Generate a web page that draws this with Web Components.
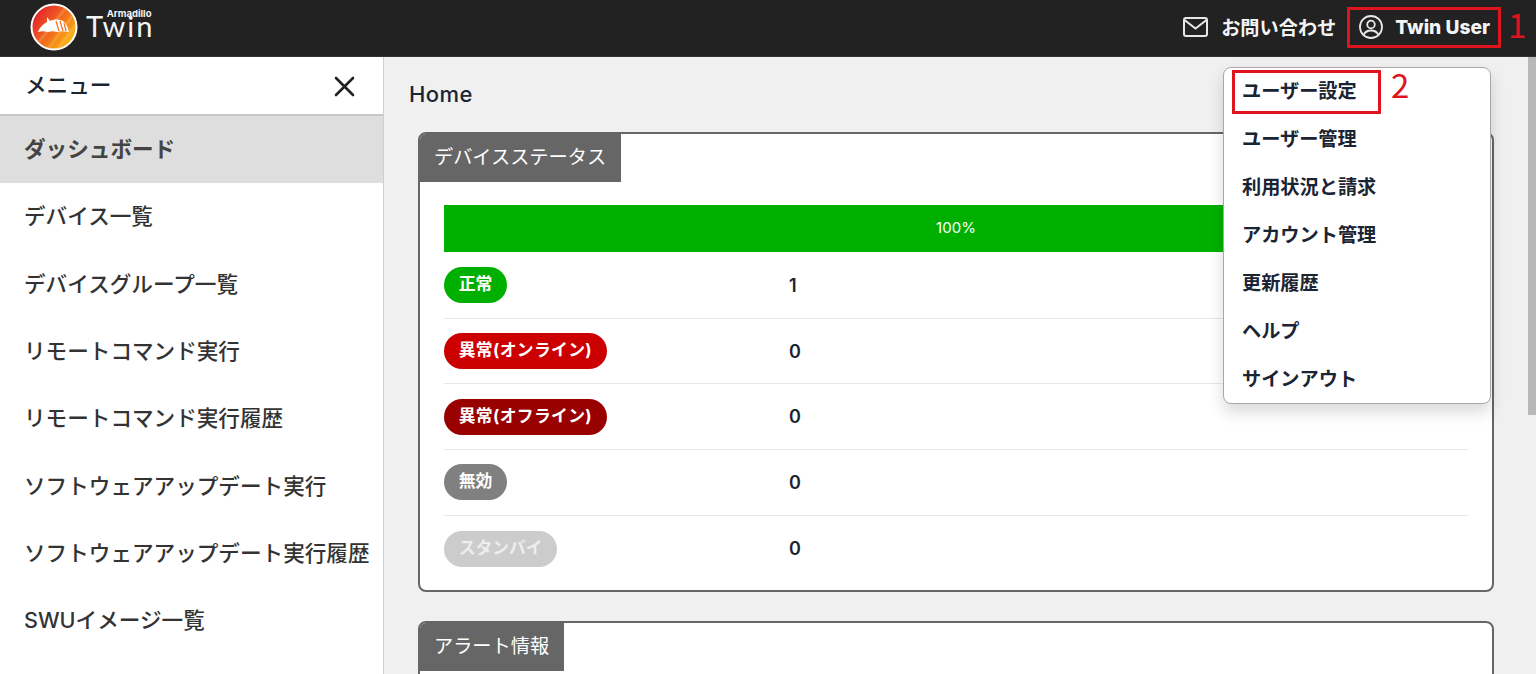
<!DOCTYPE html>
<html lang="ja">
<head>
<meta charset="utf-8">
<title>Armadillo Twin</title>
<style>
    html, body {
        margin: 0;
        height: 100%;
        overflow: hidden;
    }

    body {
        font-family: Inter, "Noto Sans CJK JP", sans-serif;
        color: #1a2433;
    }
</style>
</head>
<body>
<tw-app>
    <tw-header slot="header"></tw-header>
    <tw-sidebar slot="sidebar">
        <tw-nav-item active>ダッシュボード</tw-nav-item>
        <tw-nav-item>デバイス一覧</tw-nav-item>
        <tw-nav-item>デバイスグループ一覧</tw-nav-item>
        <tw-nav-item>リモートコマンド実行</tw-nav-item>
        <tw-nav-item>リモートコマンド実行履歴</tw-nav-item>
        <tw-nav-item>ソフトウェアアップデート実行</tw-nav-item>
        <tw-nav-item>ソフトウェアアップデート実行履歴</tw-nav-item>
        <tw-nav-item>SWUイメージ一覧</tw-nav-item>
    </tw-sidebar>
    <tw-card heading="デバイスステータス">
        <tw-progress>100%</tw-progress>
        <tw-status-row color="#00b000" value="1">正常</tw-status-row>
        <tw-status-row color="#cc0000" value="0" style="letter-spacing: 0.35px">異常(オンライン)</tw-status-row>
        <tw-status-row color="#990000" value="0" style="letter-spacing: 0.35px">異常(オフライン)</tw-status-row>
        <tw-status-row color="#808080" value="0">無効</tw-status-row>
        <tw-status-row color="#cccccc" value="0" last>スタンバイ</tw-status-row>
    </tw-card>
    <tw-card heading="アラート情報"></tw-card>
    <tw-user-menu slot="overlay"></tw-user-menu>
</tw-app>

<script>
// Page frame: header on top, sidebar, scrolling content and its scrollbar below.
var templateApp = document.createElement('template')
templateApp.innerHTML = `
<style>
    :host {
        display: grid;
        grid-template-columns: 384px 1fr 8px;
        grid-template-rows: 57px 617px;
        height: 674px;
        position: relative;
        overflow: hidden;
        background: #f0f0f0;
    }

    ::slotted([slot="header"]) {
        grid-column: 1 / -1;
    }

    .content {
        overflow: hidden;
        padding: 20px 34px 0 25px;
        display: flex;
        flex-direction: column;
        gap: 30px;
        min-width: 0;
    }

    .page-title {
        font-size: 22px;
        letter-spacing: 0.4px;
        line-height: 34px;
        font-weight: 500;
        margin-bottom: -9px;
        color: #1a2433;
    }

    .cards {
        display: flex;
        flex-direction: column;
        gap: 29px;
        margin-left: 9px;
    }

    .track {
        background: #f0f0f0;
    }

    .thumb {
        height: 358px;
        background: #b8b8b8;
    }
</style>
<slot name="header"></slot>
<slot name="sidebar"></slot>
<div class="content">
    <div class="page-title">Home</div>
    <div class="cards"><slot></slot></div>
</div>
<div class="track"><div class="thumb"></div></div>
<slot name="overlay"></slot>
`

class TwApp extends HTMLElement {
    constructor() {
        super()
        this.shadow = this.attachShadow({ mode: 'open' })
        this.shadow.appendChild(templateApp.content.cloneNode(true))
    }
}

// Top bar with logo, contact link and the user button.
var templateHeader = document.createElement('template')
templateHeader.innerHTML = `
<style>
    :host {
        display: flex;
        align-items: center;
        background: #222222;
        color: #ffffff;
        padding: 0 46px 2px 30px;
        border-bottom: 1px solid #333;
        box-sizing: border-box;
    }

    .brand {
        display: flex;
        align-items: center;
        gap: 8px;
    }

    .wordmark {
        font-family: Lato, sans-serif;
        font-size: 29px;
        font-weight: 400;
        letter-spacing: 2px;
        line-height: 16px;
        margin-bottom: 10px;
        color: #f4f4f4;
    }

    .wordmark small {
        display: block;
        height: 7px;
        text-align: right;
        padding-right: 3px;
        font-family: Inter, sans-serif;
        font-size: 9.500px;
        font-weight: 700;
        letter-spacing: 0;
        line-height: 7px;
    }

    .wordmark span {
        display: block;
        margin-top: 1px;
    }

    .spacer {
        flex: 1;
    }

    .link {
        display: flex;
        align-items: center;
        font-size: 19.2px;
        font-weight: 700;
        color: #f4f4f4;
        white-space: nowrap;
    }

    .contact {
        gap: 13px;
        margin-right: 23px;
    }

    .user {
        gap: 12px;
    }

    .user span {
        font-size: 19.2px;
        font-weight: 800;
    }

    svg {
        display: block;
        flex: none;
    }
</style>
<div class="brand">
    <svg width="48" height="48" viewBox="0 0 48 48">
        <defs>
            <linearGradient id="sun" x1="0.1" y1="0.2" x2="0.9" y2="0.8">
                <stop offset="0" stop-color="#e4252c"/>
                <stop offset="0.55" stop-color="#f2701c"/>
                <stop offset="1" stop-color="#fbb80f"/>
            </linearGradient>
            <clipPath id="disc"><circle cx="24" cy="24" r="22"/></clipPath>
        </defs>
        <circle cx="24" cy="24" r="22.500" fill="url(#sun)" stroke="#fff" stroke-width="2"/>
        <g clip-path="url(#disc)" stroke="#ffe08a" stroke-opacity="0.22" stroke-width="3">
            <path d="M18 46L46 8M26 48L50 16M8 40L38 2"/>
        </g>
        <path d="M8 29c2-5 5-8 9-10l0-5 3 4c4-2 9-2 13 0 3 2 5 6 6 11-5-1-9-1-12 0-3-1-6-1-9 0-4-1-7-1-10 0z" fill="#fff"/>
        <path d="M26 18l3 10M30 18l3 10M34 20l2 8" stroke="#f2701c" stroke-width="1.200" fill="none"/>
    </svg>
    <div class="wordmark"><small>Armadillo</small><span>Twin</span></div>
</div>
<div class="spacer"></div>
<div class="link contact">
    <svg width="25" height="20" viewBox="0 0 25 20" fill="none" stroke="#e8e8e8" stroke-width="2">
        <rect x="1" y="1" width="23" height="18" rx="2"/>
        <path d="M1.500 3l11 8.500L23.500 3"/>
    </svg>
    お問い合わせ
</div>
<div class="link user">
    <svg width="24" height="24" viewBox="0 0 24 24" fill="none" stroke="#e8e8e8" stroke-width="1.800">
        <circle cx="12" cy="12" r="11"/>
        <circle cx="12" cy="9.500" r="3.800"/>
        <path d="M4.800 19.500c1.500-3 4-4 7.200-4s5.700 1 7.200 4"/>
    </svg>
    <span>Twin User</span>
</div>
`

class TwHeader extends HTMLElement {
    constructor() {
        super()
        this.shadow = this.attachShadow({ mode: 'open' })
        this.shadow.appendChild(templateHeader.content.cloneNode(true))
    }
}

// Left navigation.
var templateSidebar = document.createElement('template')
templateSidebar.innerHTML = `
<style>
    :host {
        display: block;
        background: #ffffff;
        border-right: 1px solid #cfcfcf;
        overflow: hidden;
    }

    .head {
        display: flex;
        align-items: center;
        justify-content: space-between;
        height: 59px;
        box-sizing: border-box;
        padding: 0 28px 4px 25px;
        border-bottom: 2px solid #c8c8c8;
        font-size: 21.6px;
        font-weight: 500;
        color: #1a2433;
    }

    svg {
        display: block;
        margin-top: 5px;
    }
</style>
<div class="head">
    <span>メニュー</span>
    <svg width="21" height="21" viewBox="0 0 21 21" stroke="#222" stroke-width="2.600" stroke-linecap="round">
        <path d="M2 2l17 17M19 2L2 19"/>
    </svg>
</div>
<slot></slot>
`

class TwSidebar extends HTMLElement {
    constructor() {
        super()
        this.shadow = this.attachShadow({ mode: 'open' })
        this.shadow.appendChild(templateSidebar.content.cloneNode(true))
    }
}

var templateNavItem = document.createElement('template')
templateNavItem.innerHTML = `
<style>
    :host {
        display: flex;
        align-items: center;
        box-sizing: border-box;
        height: 67.300px;
        padding: 0 0 4px 24px;
        font-size: 21.6px;
        font-weight: 500;
        color: #333333;
        white-space: nowrap;
    }

    :host([active]) {
        background: #dedede;
        font-weight: 700;
        color: #444444;
    }
</style>
<slot></slot>
`

class TwNavItem extends HTMLElement {
    constructor() {
        super()
        this.shadow = this.attachShadow({ mode: 'open' })
        this.shadow.appendChild(templateNavItem.content.cloneNode(true))
    }
}

// Card with the grey tab in its top left corner.
var templateCard = document.createElement('template')
templateCard.innerHTML = `
<style>
    :host {
        display: block;
        background: #ffffff;
        border: 2px solid #666666;
        border-radius: 8px;
        overflow: hidden;
        flex: none;
    }

    .tab {
        display: inline-block;
        height: 48px;
        line-height: 46px;
        padding: 0 15px 0 14px;
        background: #666666;
        color: #ffffff;
        font-size: 19.2px;
        font-weight: 400;
        vertical-align: top;
    }

    .tab-row {
        height: 48px;
    }

    .body {
        padding: 23px 24px 9px 24px;
    }
</style>
<div class="tab-row"><span class="tab"></span></div>
<div class="body"><slot></slot></div>
`

class TwCard extends HTMLElement {
    constructor() {
        super()
        this.shadow = this.attachShadow({ mode: 'open' })
        this.shadow.appendChild(templateCard.content.cloneNode(true))
    }

    connectedCallback() {
        this.shadow.querySelector('.tab').textContent = this.getAttribute('heading')
    }
}

var templateProgress = document.createElement('template')
templateProgress.innerHTML = `
<style>
    :host {
        display: flex;
        align-items: center;
        justify-content: center;
        box-sizing: border-box;
        height: 47px;
        padding-bottom: 2px;
        margin-bottom: 1px;
        background: #00b000;
        color: #ffffff;
        font-size: 15px;
    }
</style>
<slot></slot>
`

class TwProgress extends HTMLElement {
    constructor() {
        super()
        this.shadow = this.attachShadow({ mode: 'open' })
        this.shadow.appendChild(templateProgress.content.cloneNode(true))
    }
}

// One status line: coloured pill and a count.
var templateStatusRow = document.createElement('template')
templateStatusRow.innerHTML = `
<style>
    :host {
        display: grid;
        grid-template-columns: 345px 1fr;
        align-items: center;
        height: 65.700px;
        box-sizing: border-box;
        border-bottom: 1px solid #e8e8e8;
    }

    :host([last]) {
        border-bottom: none;
    }

    .pill {
        justify-self: start;
        height: 36px;
        line-height: 35px;
        padding: 0 14.700px;
        border-radius: 18px;
        color: #ffffff;
        font-size: 16.800px;
        font-weight: 700;
        white-space: nowrap;
    }

    :host([last]) .pill {
        color: #eeeeee;
    }

    .value {
        font-size: 18px;
        font-weight: 600;
        color: #1a2433;
    }
</style>
<span class="pill"><slot></slot></span>
<span class="value"></span>
`

class TwStatusRow extends HTMLElement {
    constructor() {
        super()
        this.shadow = this.attachShadow({ mode: 'open' })
        this.shadow.appendChild(templateStatusRow.content.cloneNode(true))
    }

    connectedCallback() {
        this.shadow.querySelector('.pill').style.background = this.getAttribute('color')
        this.shadow.querySelector('.value').textContent = this.getAttribute('value')
    }
}

// Open user menu plus the red numbered marks of the manual screenshot.
var menuLabels = ['ユーザー設定', 'ユーザー管理', '利用状況と請求', 'アカウント管理', '更新履歴', 'ヘルプ', 'サインアウト']

var templateUserMenu = document.createElement('template')
templateUserMenu.innerHTML = `
<style>
    :host {
        display: block;
    }

    .menu {
        position: absolute;
        left: 1223px;
        top: 67px;
        width: 268px;
        height: 337px;
        box-sizing: border-box;
        padding: 0 18px;
        background: #ffffff;
        border: 1px solid #a8a8a8;
        border-radius: 8px;
        box-shadow: 0 8px 16px rgba(0, 0, 0, 0.15);
    }

    .menu div {
        height: 48px;
        line-height: 47px;
        font-size: 19.2px;
        font-weight: 700;
        color: #1a2433;
        white-space: nowrap;
    }

    .mark {
        position: absolute;
        box-sizing: border-box;
        border: 3px solid #e0141e;
    }

    .num {
        position: absolute;
        color: #e0141e;
        font-family: "Noto Sans CJK JP", sans-serif;
        font-size: 33px;
        line-height: 36px;
    }
</style>
<div class="menu"></div>
<div class="mark" style="left:1347px;top:7px;width:154px;height:41px"></div>
<div class="num" style="left:1508px;top:6px">1</div>
<div class="mark" style="left:1232px;top:70px;width:149px;height:44px"></div>
<div class="num" style="left:1391px;top:66px">2</div>
`

class TwUserMenu extends HTMLElement {
    constructor() {
        super()
        this.shadow = this.attachShadow({ mode: 'open' })
        this.shadow.appendChild(templateUserMenu.content.cloneNode(true))
    }

    connectedCallback() {
        const menu = this.shadow.querySelector('.menu')
        menuLabels.forEach((label) => {
            const row = document.createElement('div')
            row.textContent = label
            menu.appendChild(row)
        })
    }
}

window.customElements.define('tw-app', TwApp)
window.customElements.define('tw-header', TwHeader)
window.customElements.define('tw-sidebar', TwSidebar)
window.customElements.define('tw-nav-item', TwNavItem)
window.customElements.define('tw-card', TwCard)
window.customElements.define('tw-progress', TwProgress)
window.customElements.define('tw-status-row', TwStatusRow)
window.customElements.define('tw-user-menu', TwUserMenu)
</script>
</body>
</html>
